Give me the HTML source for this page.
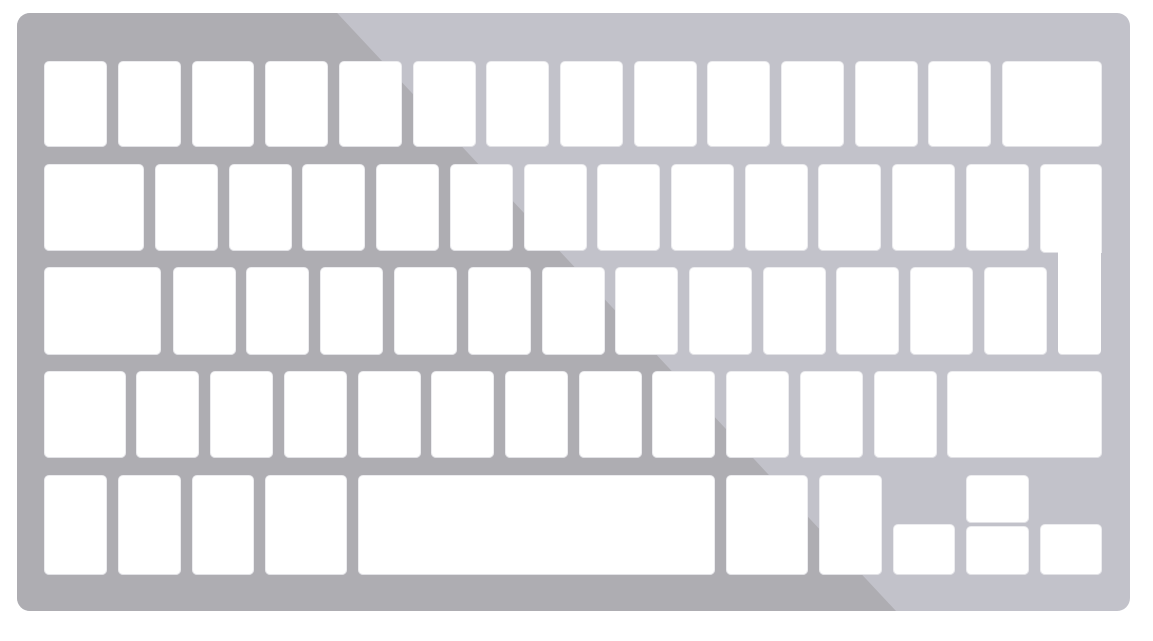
<!DOCTYPE html>
<html><head><style>
body{margin:0;width:1153px;height:641px;background:#fff;position:relative;overflow:hidden}
.k{position:absolute;background:#fff;border-radius:4px;box-shadow:0 1px 0 #e2e2e6,0 0 0 1px #ececef}
</style></head><body>
<svg width="1153" height="641" style="position:absolute;left:0;top:0">
<defs><clipPath id="c"><rect x="17" y="13" width="1113" height="598" rx="13"/></clipPath></defs>
<g clip-path="url(#c)">
<rect x="17" y="13" width="1113" height="598" fill="#c2c2ca"/>
<polygon points="0,0 325,0 896,611 0,611" fill="#aeadb2"/>
</g>
</svg>
<div id="kb"></div>
<script>
const rows=[
[62,146,[[45,106],[119,180],[193,253],[266,327],[340,401],[414,475],[487,548],[561,622],[635,696],[708,769],[782,843],[856,917],[929,990],[1003,1101]]],
[165,250,[[45,143],[156,217],[230,291],[303,364],[377,438],[451,512],[525,586],[598,659],[672,733],[746,807],[819,880],[893,954],[967,1028]]],
[268,354,[[45,160],[174,235],[247,308],[321,382],[395,456],[469,530],[543,604],[616,677],[690,751],[764,825],[837,898],[911,972],[985,1046]]],
[372,457,[[45,125],[137,198],[211,272],[285,346],[359,420],[432,493],[506,567],[580,641],[653,714],[727,788],[801,862],[875,936],[948,1101]]],
[476,574,[[45,106],[119,180],[193,253],[266,346],[359,714],[727,807],[820,881]]]
];
let h='';
function k(x1,y1,x2,y2,extra){h+=`<div class="k" style="left:${x1}px;top:${y1}px;width:${x2-x1}px;height:${y2-y1}px;${extra||''}"></div>`}
rows.forEach(r=>r[2].forEach(c=>k(c[0],r[0],c[1],r[1])));
k(1041,165,1101,252,'border-bottom-right-radius:0');
k(1058,240,1101,354,'border-top-left-radius:0;border-top-right-radius:0;box-shadow:0 1px 0 #e2e2e6');
k(894,525,954,574);k(967,476,1028,522);k(967,527,1028,574);k(1041,525,1101,574);
document.getElementById('kb').innerHTML=h;
</script>
</body></html>
